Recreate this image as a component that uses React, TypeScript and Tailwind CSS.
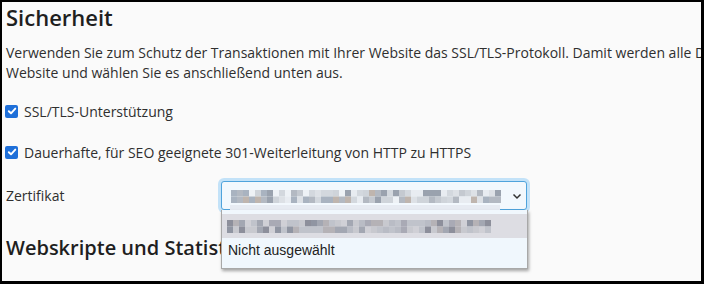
import React from "react";

function Mosaic({ cols, rows, bw, bh, palette, seed }: { cols: number; rows: number; bw: number; bh: number; palette: string[]; seed: number }) {
  let s = seed;
  const rnd = () => {
    s = (s * 1103515245 + 12345) % 2147483648;
    return s / 2147483648;
  };
  const rects: React.ReactElement[] = [];
  for (let r = 0; r < rows; r++) {
    for (let c = 0; c < cols; c++) {
      const col = palette[Math.floor(rnd() * palette.length)];
      rects.push(<rect key={r + "-" + c} x={c * bw} y={r * bh} width={bw} height={bh} fill={col} />);
    }
  }
  return (
    <svg width={cols * bw} height={rows * bh} className="block">
      {rects}
    </svg>
  );
}

function Check() {
  return (
    <span className="ml-[-1px] flex h-[13px] w-[13px] shrink-0 items-center justify-center rounded-[2px] bg-[#1e6fd9]">
      <svg width="10" height="10" viewBox="0 0 10 10">
        <path d="M1.8 5.2 L4 7.3 L8.3 2.6" fill="none" stroke="#fff" strokeWidth="1.9" strokeLinecap="round" strokeLinejoin="round" />
      </svg>
    </span>
  );
}

export default function App() {
  const p1 = ["#d3d8de", "#c4c9d0", "#b3b9c2", "#dde1e6", "#bfb5ae", "#a9b3c0", "#cfd4da", "#e8ecf1", "#9aa2ae", "#eef2f6"];
  const p2 = ["#a9aab5", "#9095a2", "#c0c3cb", "#b5b2b6", "#a3a7b2", "#c8c9cf", "#8d8f9b", "#b9bcc5", "#d0d0d6"];
  return (
    <div
      className="relative h-[284px] w-[704px] overflow-hidden border-t-2 border-l-2 border-r-[3px] border-b-[3px] border-black bg-[#fafafa] text-[#2f2f2f]"
      style={{ fontFamily: '"Open Sans", "Noto Sans", sans-serif' }}
    >
      <div className="pl-[4px]">
        <h2 className="text-[22px] leading-[30px] font-semibold text-[#1f1f1f]">Sicherheit</h2>
        <p className="mt-[11px] whitespace-nowrap text-[14px] leading-[20px]">
          Verwenden Sie zum Schutz der Transaktionen mit Ihrer Website das SSL/TLS-Protokoll. Damit werden alle Daten verschlüsselt übertragen.
          <br />
          Website und wählen Sie es anschließend unten aus.
        </p>
        <label className="mt-[18px] flex h-[20px] items-center gap-[6px] text-[14px]">
          <Check />
          <span>SSL/TLS-Unterstützung</span>
        </label>
        <label className="mt-[21px] flex h-[20px] items-center gap-[6px] text-[14px]">
          <Check />
          <span>Dauerhafte, für SEO geeignete 301-Weiterleitung von HTTP zu HTTPS</span>
        </label>
        <div className="mt-[18px] flex h-[30px] items-center text-[14px]">
          <span className="w-[215px] shrink-0">Zertifikat</span>
          <div className="relative h-[29px] w-[306px] rounded-[3px] border border-[#4fa3dc] bg-[#f2f8fd] shadow-[0_0_0_3px_#c3e2f8]">
            <div className="absolute left-[9px] top-[8px]">
              <Mosaic cols={45} rows={2} bw={6} bh={6.5} palette={p1} seed={7} />
            </div>
            <svg className="absolute right-[4px] top-[11px]" width="10" height="7" viewBox="0 0 10 7">
              <path d="M1.5 1.5 L5 5 L8.5 1.5" fill="none" stroke="#333" strokeWidth="1.5" />
            </svg>
          </div>
        </div>
        <h2 className="mt-[23px] whitespace-nowrap text-[20px] leading-[30px] font-semibold text-[#1f1f1f]">Webskripte und Statistiken</h2>
        <p className="mt-[14px] whitespace-nowrap text-[14px] leading-[20px]">
          Wählen Sie aus, welche der folgenden Programmiersprachen und Skripte auf Ihrer Website unterstützt werden sollen.
        </p>
      </div>

      <div className="absolute left-[228px] top-[203px] h-[9px] w-[270px] bg-[#e7ebf2]" />

      <div className="absolute left-[219px] top-[208px] h-[59px] w-[307px] border-x border-b border-[#a8a8a8] bg-[#f0f7fd] shadow-[1px_2px_3px_rgba(0,0,0,0.35)]">
        <div className="mt-[4px] h-[24px] bg-[#dddde3] pl-[5px] pt-[6px]">
          <Mosaic cols={44} rows={2} bw={6} bh={6.5} palette={p2} seed={13} />
        </div>
        <div
          className="flex h-[24px] items-center pl-[6px] text-[14px] text-[#222]"
          style={{ fontFamily: '"Liberation Sans", Arial, sans-serif' }}
        >
          Nicht ausgewählt
        </div>
      </div>
    </div>
  );
}
